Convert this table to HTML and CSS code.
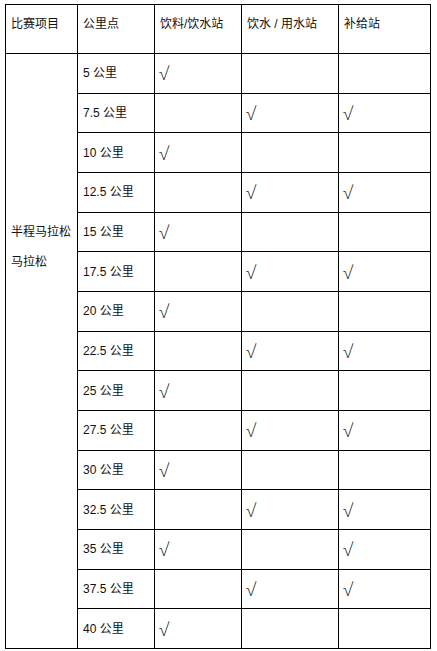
FILE: index.html
```html
<!DOCTYPE html>
<html lang="zh-CN">
<head>
<meta charset="utf-8">
<title>补给站</title>
<link rel="stylesheet" href="styles.css">
</head>
<body>
<table class="stations">
  <colgroup>
    <col class="c1"><col class="c2"><col class="c3"><col class="c4"><col class="c5">
  </colgroup>
  <thead>
    <tr class="head">
      <th>比赛项目</th><th>公里点</th><th>饮料/饮水站</th><th>饮水 / 用水站</th><th>补给站</th>
    </tr>
  </thead>
  <tbody>
    <tr><td class="event" rowspan="15"><p>半程马拉松</p><p>马拉松</p></td><td>5 公里</td><td class="ck">√</td><td></td><td></td></tr>
    <tr><td>7.5 公里</td><td></td><td class="ck">√</td><td class="ck">√</td></tr>
    <tr><td>10 公里</td><td class="ck">√</td><td></td><td></td></tr>
    <tr><td>12.5 公里</td><td></td><td class="ck">√</td><td class="ck">√</td></tr>
    <tr><td>15 公里</td><td class="ck">√</td><td></td><td></td></tr>
    <tr><td>17.5 公里</td><td></td><td class="ck">√</td><td class="ck">√</td></tr>
    <tr><td>20 公里</td><td class="ck">√</td><td></td><td></td></tr>
    <tr><td>22.5 公里</td><td></td><td class="ck">√</td><td class="ck">√</td></tr>
    <tr><td>25 公里</td><td class="ck">√</td><td></td><td></td></tr>
    <tr><td>27.5 公里</td><td></td><td class="ck">√</td><td class="ck">√</td></tr>
    <tr><td>30 公里</td><td class="ck">√</td><td></td><td></td></tr>
    <tr><td>32.5 公里</td><td></td><td class="ck">√</td><td class="ck">√</td></tr>
    <tr><td>35 公里</td><td class="ck">√</td><td></td><td class="ck">√</td></tr>
    <tr><td>37.5 公里</td><td></td><td class="ck">√</td><td class="ck">√</td></tr>
    <tr><td>40 公里</td><td class="ck">√</td><td></td><td></td></tr>
  </tbody>
</table>
</body>
</html>
```
FILE: styles.css
```css
html, body {
  margin: 0;
  padding: 0;
  background: #ffffff;
}
body {
  padding: 4px 0 0 5px;
  font-family: "Liberation Sans", "Noto Sans CJK SC", sans-serif;
  font-size: 12px;
  color: #111111;
}
.stations {
  border-collapse: collapse;
  table-layout: fixed;
  width: 425px;
}
.c1 { width: 72px; }
.c2 { width: 77px; }
.c3 { width: 87px; }
.c4 { width: 97px; }
.c5 { width: 92px; }
.stations th,
.stations td {
  border: 1px solid #000;
  padding: 0 5px;
  text-align: left;
  font-weight: normal;
  line-height: 16px;
}
.head th {
  height: 49px;
  vertical-align: top;
  padding-top: 11px;
  box-sizing: border-box;
}
.stations tbody tr {
  height: 39.67px;
}
.stations tbody td {
  vertical-align: middle;
}
.stations td.event {
  vertical-align: top;
  padding-top: 163px;
}
.event p {
  margin: 0;
  line-height: 30px;
}
.stations td.ck {
  font-family: "Open Sans", "Liberation Sans", sans-serif;
  font-size: 18px;
  font-weight: 300;
  padding-left: 4px;
}
```
